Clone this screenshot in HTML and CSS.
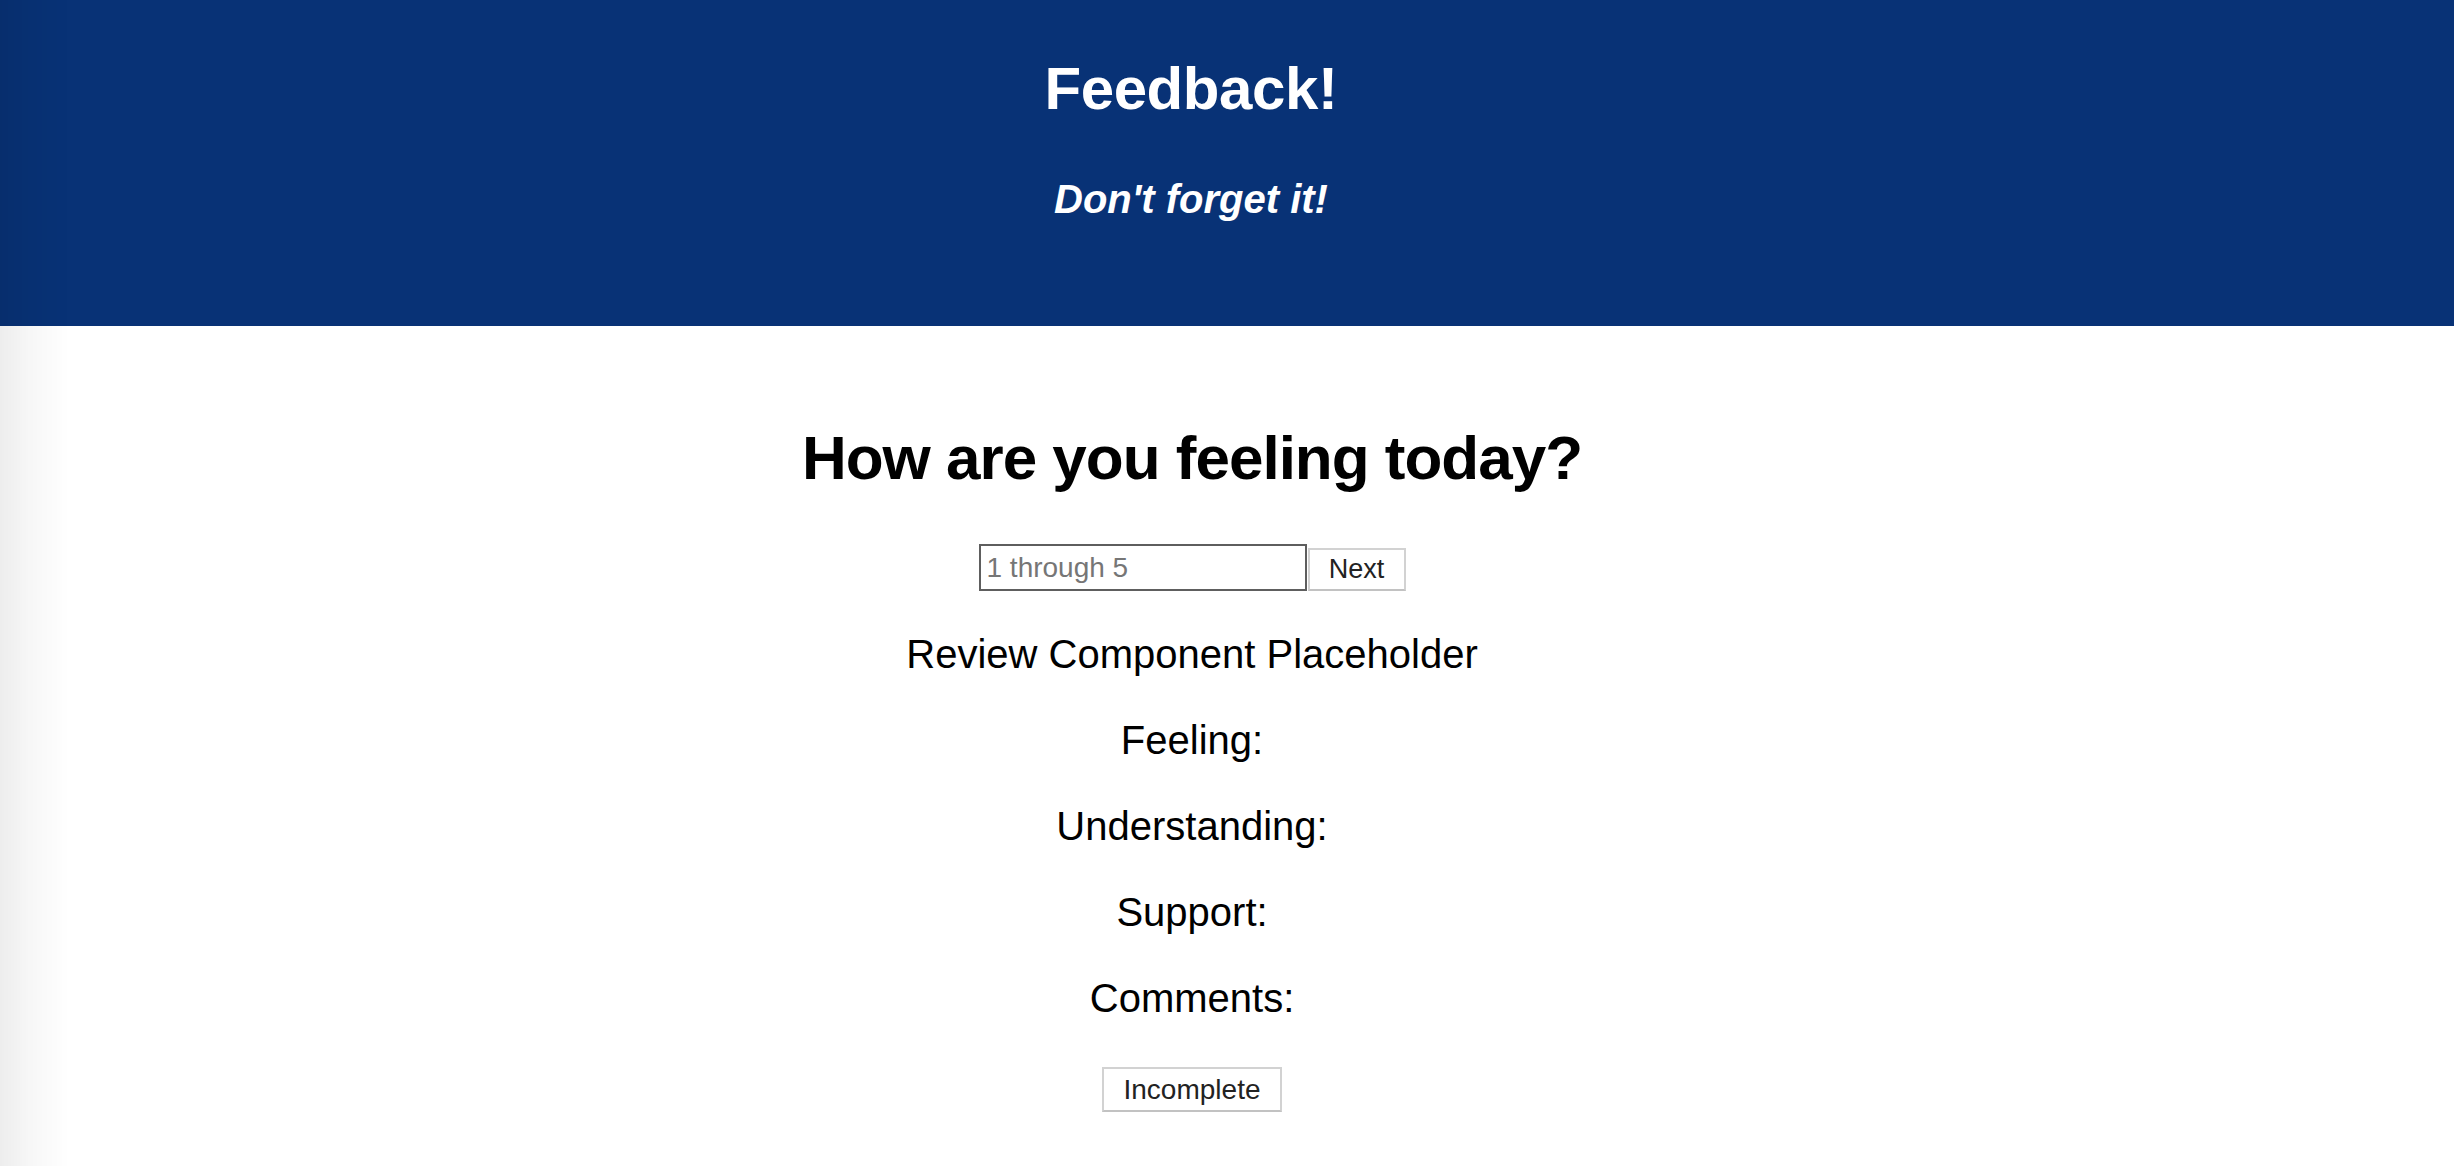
FILE: index.html
```html
<!DOCTYPE html>
<html lang="en">
<head>
<meta charset="utf-8">
<title>Feedback!</title>
<link rel="stylesheet" href="styles.css">
</head>
<body>
<div class="edge-shade"></div>
<header class="hero">
  <h1 class="hero-title">Feedback!</h1>
  <h2 class="hero-sub">Don't forget it!</h2>
</header>
<main class="content">
  <h2 class="question">How are you feeling today?</h2>
  <div class="answer-row">
    <input class="answer-input" type="text" placeholder="1 through 5">
    <button class="btn btn-next">Next</button>
  </div>
  <p class="line">Review Component Placeholder</p>
  <p class="line">Feeling:</p>
  <p class="line">Understanding:</p>
  <p class="line">Support:</p>
  <p class="line">Comments:</p>
  <div class="submit-row">
    <button class="btn btn-submit">Incomplete</button>
  </div>
</main>
</body>
</html>
```
FILE: styles.css
```css
html, body {
  margin: 0;
  padding: 0;
  background: #ffffff;
}
body {
  font-family: "Liberation Sans", Arial, Helvetica, sans-serif;
  color: #000;
}
.edge-shade {
  position: fixed;
  top: 0;
  left: 0;
  bottom: 0;
  width: 70px;
  background: linear-gradient(to right, rgba(0, 0, 0, 0.07), rgba(0, 0, 0, 0.03) 30px, rgba(0, 0, 0, 0));
  pointer-events: none;
  z-index: 5;
}
.hero {
  background: #083276;
  color: #fff;
  text-align: center;
  height: 326px;
  box-sizing: border-box;
  padding: 54px 72px 0 0;
}
.hero-title {
  margin: 0;
  font-size: 60px;
  line-height: 70px;
  font-weight: bold;
  letter-spacing: -0.4px;
}
.hero-sub {
  margin: 52px 0 0;
  font-size: 40px;
  line-height: 46px;
  font-weight: bold;
  font-style: italic;
}
.content {
  text-align: center;
  padding-right: 70px;
}
.question {
  margin: 95px 0 49px;
  font-size: 62px;
  line-height: 74px;
  font-weight: bold;
  letter-spacing: -1px;
}
.answer-row {
  display: flex;
  justify-content: center;
  align-items: flex-end;
}
.answer-input {
  width: 328px;
  height: 47px;
  box-sizing: border-box;
  border: 2px solid #5e5e5e;
  padding: 0 6px;
  font-family: "Liberation Sans", Arial, sans-serif;
  font-size: 28px;
  color: #000;
  background: #fff;
  outline: none;
  margin: 0;
}
.answer-input::placeholder {
  color: #767676;
}
.btn {
  font-family: "Liberation Sans", Arial, sans-serif;
  background: #fff;
  color: #222;
  border: 2px solid #d2d2d2;
  border-bottom-color: #c2c2c2;
  margin: 0;
  padding: 0;
  box-sizing: border-box;
}
.btn-next {
  width: 98px;
  height: 43px;
  font-size: 27px;
  margin-left: 1px;
}
.line {
  margin: 40px 0;
  font-size: 40px;
  line-height: 46px;
}
.submit-row {
  margin-top: 46px;
  display: flex;
  justify-content: center;
}
.btn-submit {
  width: 180px;
  height: 45px;
  font-size: 28px;
}
```
